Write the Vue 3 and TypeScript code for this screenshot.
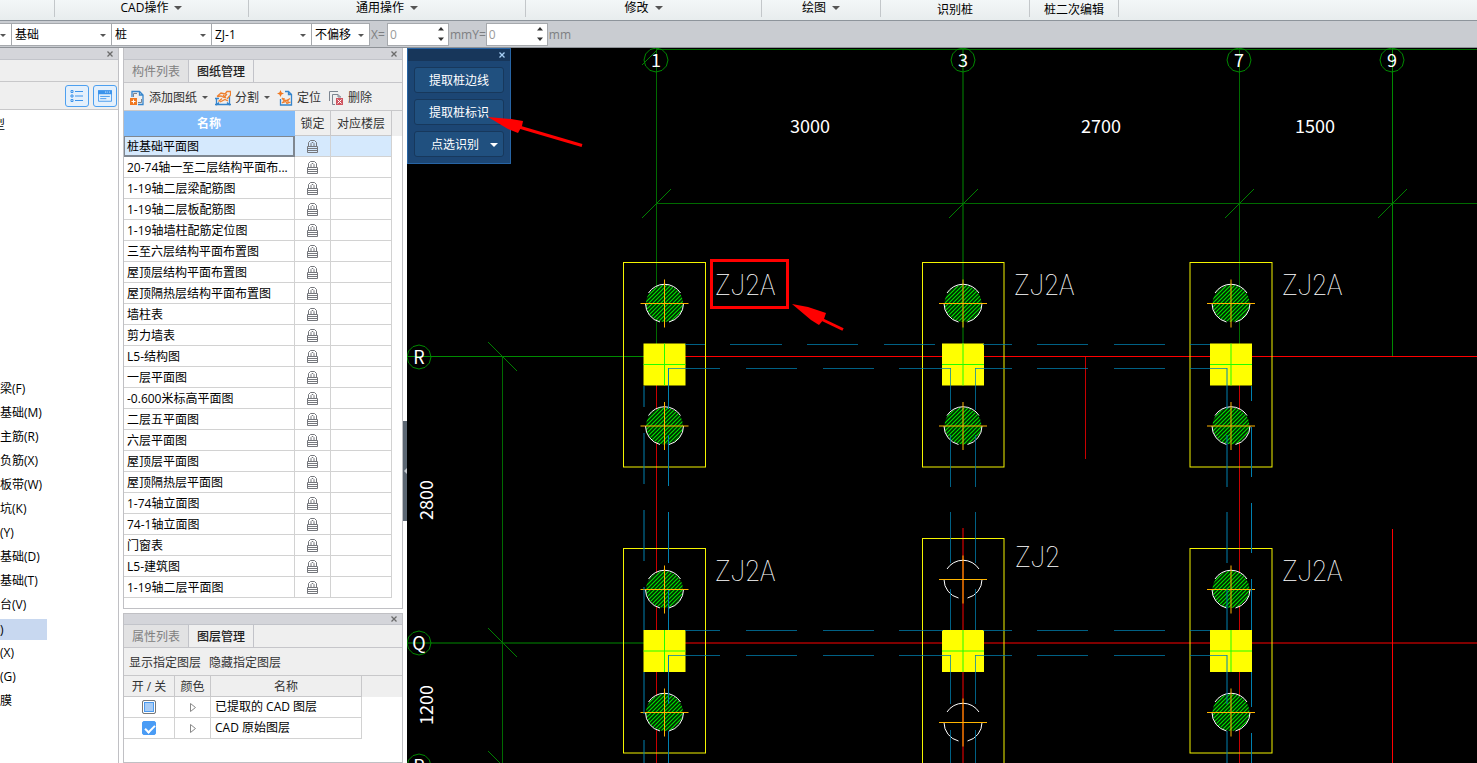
<script setup lang="ts">
import { ref } from 'vue'

interface RibbonGroup { label: string; menu: boolean }
interface Drawing { name: string }
interface Segment { x1: number; y1: number; x2: number; y2: number; kind: string }
interface Cap { frame: [number, number, number, number]; cx: number; piles: number[]; square: number; hatched: boolean; label: string; tx: number; ty: number }

const ribbon: RibbonGroup[] = [
  { label: '', menu: false },
  { label: 'CAD操作', menu: true },
  { label: '通用操作', menu: true },
  { label: '修改', menu: true },
  { label: '绘图', menu: true },
  { label: '识别桩', menu: false },
  { label: '桩二次编辑', menu: false },
]

const combos = [
  { id: 'category', label: '类别', value: '基础' },
  { id: 'type', label: '类型', value: '桩' },
  { id: 'component', label: '构件', value: 'ZJ-1' },
]

const tree = ['梁(F)', '基础(M)', '主筋(R)', '负筋(X)', '板带(W)', '坑(K)', '(Y)', '基础(D)', '基础(T)', '台(V)', ')', '(X)', '(G)', '膜']
const activeNode = 10

const drawings: Drawing[] = [
  '桩基础平面图', '20-74轴一至二层结构平面布...', '1-19轴二层梁配筋图', '1-19轴二层板配筋图',
  '1-19轴墙柱配筋定位图', '三至六层结构平面布置图', '屋顶层结构平面布置图', '屋顶隔热层结构平面布置图',
  '墙柱表', '剪力墙表', 'L5-结构图', '一层平面图', '-0.600米标高平面图', '二层五平面图', '六层平面图',
  '屋顶层平面图', '屋顶隔热层平面图', '1-74轴立面图', '74-1轴立面图', '门窗表', 'L5-建筑图', '1-19轴二层平面图',
].map((name) => ({ name }))
const selected = ref(0)

const layers = ref([
  { id: 'extracted', name: '已提取的 CAD 图层', on: false, partial: true },
  { id: 'original', name: 'CAD 原始图层', on: true, partial: false },
])

const offsetX = ref('0')
const offsetY = ref('0')

/* Drawing coordinates are window coordinates; the group is shifted into the canvas. */
const h = (y: number, kind: string, ...spans: [number, number][]): Segment[] =>
  spans.map(([a, b]) => ({ x1: a, y1: y, x2: b, y2: y, kind }))
const v = (x: number, kind: string, ...spans: [number, number][]): Segment[] =>
  spans.map(([a, b]) => ({ x1: x, y1: a, x2: x, y2: b, kind }))

const axes: Segment[] = [
  ...h(49.5, 'green-mid', [656, 2400]),
  ...h(203.5, 'green-mid', [656, 2400]),
  ...v(656.5, 'green-mid', [48, 344]),
  ...v(963, 'green', [48, 344]),
  ...v(1239.5, 'green-mid', [48, 344]),
  ...v(1392.5, 'green', [48, 356]),
  ...h(356.5, 'green', [407, 644]),
  ...h(643, 'green', [407, 644]),
  ...v(502.5, 'green-mid', [357, 1400]),
  ...h(356.5, 'red', [685, 2400]),
  ...h(643, 'red', [685, 2400]),
  ...v(656.5, 'red-mid', [385, 630], [672, 1400]),
  ...v(963, 'red', [528, 630], [672, 1400]),
  ...v(1239.5, 'red-mid', [385, 630], [672, 1400]),
  ...v(1085.5, 'red-mid', [357, 459]),
  ...v(1392.5, 'red', [529, 1400]),
]

const beams: Segment[] = [
  ...h(344.5, 'blue-mid', [685, 705], [730, 782], [807, 858], [884, 935], [983, 1012], [1037, 1088], [1114, 1165], [1190, 1210]),
  ...h(368.5, 'blue-mid', [668, 720], [746, 797], [823, 874], [899, 951], [975, 1012], [1037, 1088], [1114, 1165], [1190, 1227]),
  ...h(630.5, 'blue-mid', [685, 720], [746, 797], [823, 874], [899, 943], [983, 1012], [1037, 1088], [1114, 1165], [1190, 1210]),
  ...h(655.5, 'blue-mid', [668, 720], [746, 797], [823, 874], [899, 951], [975, 1012], [1037, 1088], [1114, 1165], [1190, 1227]),
  ...v(644, 'blue', [386, 407], [433, 484], [510, 561], [587, 630], [672, 714], [740, 791]),
  ...v(668.5, 'blue', [368, 409], [435, 486], [512, 563], [590, 630], [655, 704], [731, 782]),
  ...v(950.5, 'blue-mid', [368, 410], [435, 487], [512, 563], [589, 630], [655, 704], [730, 782]),
  ...v(975.5, 'blue-mid', [368, 410], [435, 487], [512, 563], [589, 630], [655, 704], [730, 782]),
  ...v(1227, 'blue', [368, 409], [435, 487], [512, 563], [589, 630], [655, 704], [731, 782]),
  ...v(1251.5, 'blue', [386, 401], [427, 477], [503, 553], [579, 630], [672, 707], [733, 784]),
]

const caps: Cap[] = [
  { frame: [623.5, 262.5, 82, 204.5], cx: 664.5, piles: [303.5, 426], square: 343.5, hatched: true, label: 'ZJ2A', tx: 715, ty: 295 },
  { frame: [922.5, 262.5, 81.5, 204.5], cx: 963, piles: [303.5, 426], square: 343.5, hatched: true, label: 'ZJ2A', tx: 1014, ty: 295 },
  { frame: [1190, 262.5, 82, 204.5], cx: 1231, piles: [303.5, 426], square: 343.5, hatched: true, label: 'ZJ2A', tx: 1282, ty: 295 },
  { frame: [623.5, 548.5, 82, 204.5], cx: 664.5, piles: [589.5, 712.5], square: 630, hatched: true, label: 'ZJ2A', tx: 715, ty: 581 },
  { frame: [922.5, 538.5, 81.5, 300], cx: 963, piles: [579.5, 722.5], square: 630, hatched: false, label: 'ZJ2', tx: 1015, ty: 567 },
  { frame: [1190, 548.5, 82, 204.5], cx: 1231, piles: [589.5, 712.5], square: 630, hatched: true, label: 'ZJ2A', tx: 1282, ty: 581 },
]

const bubbles = [
  { x: 656, y: 60, t: '1' }, { x: 963, y: 60, t: '3' }, { x: 1239, y: 60, t: '7' }, { x: 1392, y: 60, t: '9' },
  { x: 419, y: 357, t: 'R' }, { x: 419, y: 643, t: 'Q' }, { x: 419, y: 766, t: 'P' },
]
const ring = (cx: number, cy: number): string =>
  Array.from({ length: 12 }, (_, i) => {
    const a = (i * Math.PI) / 6
    return `${(cx + 12 * Math.cos(a)).toFixed(1)},${(cy + 12 * Math.sin(a)).toFixed(1)}`
  }).join(' ')

const ticksUp = [[656, 203], [963, 203], [1239, 203], [1392, 203], [656, 50]]
const ticksDown = [[502, 357], [502, 643], [502, 766]]
const dims = [{ x: 810, y: 133, t: '3000' }, { x: 1101, y: 133, t: '2700' }, { x: 1315, y: 133, t: '1500' }]
const sideDims = [{ x: 433, y: 500, t: '2800' }, { x: 433, y: 705, t: '1200' }]
</script>

<template>
  <div class="app">
    <nav class="ribbon">
      <div v-for="(g, i) in ribbon" :key="i" class="group">
        <button v-if="g.label" type="button" class="plain" :class="{ menu: g.menu }">
          {{ g.label }}
          <svg v-if="g.menu" class="tri big" viewBox="0 0 8 4"><path d="M0 0h8L4 4z" /></svg>
        </button>
      </div>
    </nav>

    <div class="options">
      <div class="combo stub">
        <select aria-label="楼层"><option></option></select>
        <svg class="tri" viewBox="0 0 6 3"><path d="M0 0h6L3 3z" /></svg>
      </div>
      <div v-for="c in combos" :key="c.id" class="combo">
        <select :id="c.id" :aria-label="c.label"><option>{{ c.value }}</option></select>
        <svg class="tri" viewBox="0 0 6 3"><path d="M0 0h6L3 3z" /></svg>
      </div>
      <div class="combo short">
        <select aria-label="偏移"><option>不偏移</option></select>
        <svg class="tri" viewBox="0 0 6 3"><path d="M0 0h6L3 3z" /></svg>
      </div>
      <label for="ox" class="unit lead">X=</label>
      <div class="spin">
        <input id="ox" v-model="offsetX" type="text" />
        <svg viewBox="0 0 6 14"><path d="M0 3.500L3 0l3 3.500zM0 10.500h6L3 14z" /></svg>
      </div>
      <label for="oy" class="unit">mmY=</label>
      <div class="spin">
        <input id="oy" v-model="offsetY" type="text" />
        <svg viewBox="0 0 6 14"><path d="M0 3.500L3 0l3 3.500zM0 10.500h6L3 14z" /></svg>
      </div>
      <span class="unit">mm</span>
    </div>

    <main class="work">
      <aside class="nav">
        <div class="strip">
          <button type="button" class="close" aria-label="关闭导航"><svg viewBox="0 0 6 6"><path d="M0.500 0.500l5 5M5.500 0.500l-5 5" /></svg></button>
        </div>
        <div class="nav-head"></div>
        <div class="nav-tools">
          <button type="button" class="view" aria-label="列表视图">
            <svg viewBox="0 0 14 14"><path d="M1 1.500h2v2H1zM1 6h2v2H1zM1 10.500h2v2H1z" /><path d="M5 2.500h8M5 7h8M5 11.500h8" /></svg>
          </button>
          <button type="button" class="view" aria-label="卡片视图">
            <svg viewBox="0 0 16 14"><path d="M0.500 1h15v12H0.500z" /><path class="solid" d="M0 0.500h16V5H0z" /><path d="M2.500 7.500h11M2.500 10h7" /><path class="dots" d="M8 2.500h1M10 2.500h1M12.500 2.500h1" /></svg>
          </button>
        </div>
        <ul class="tree">
          <li class="root">型</li>
          <li v-for="(n, i) in tree" :key="i" :class="{ active: i === activeNode }"><span>{{ n }}</span></li>
        </ul>
      </aside>

      <div class="docks">
        <section class="dock">
          <div class="strip">
            <button type="button" class="close" aria-label="关闭图纸管理"><svg viewBox="0 0 6 6"><path d="M0.500 0.500l5 5M5.500 0.500l-5 5" /></svg></button>
          </div>
          <div class="tabs" role="tablist">
            <button type="button" role="tab">构件列表</button>
            <button type="button" role="tab" class="on">图纸管理</button>
          </div>
          <div class="tools">
            <button type="button" class="tool">
              <svg class="ico" viewBox="0 0 16 16">
                <path class="gray" d="M4.500 7V3.500H8M12.500 9v3.500H9" />
                <path class="blue" d="M3 7V1.500h7.500L14 5v9.500H9M10.500 1.500V5H14" />
                <path class="orange-fill" d="M1 8h7v7H1z" /><path class="white" d="M4.500 9.500v4M2.500 11.500h4" />
              </svg>
              添加图纸
              <svg class="tri" viewBox="0 0 6 3"><path d="M0 0h6L3 3z" /></svg>
            </button>
            <button type="button" class="tool">
              <svg class="ico" viewBox="0 0 16 16">
                <path class="blue" d="M1.500 15.500V8M0 14.500h16M14.500 15.500V6M0 8.500h4M12 12.500l2 2M4 12.500l-2 2" />
                <path class="orange" d="M2 6.500L6 3l4 1 2-2.500h3.500V5L12 9M2 6.500L6 6l3 1.500L12 4M3.500 11.500L7 8.500M5 12l5-2.500 3 1.500M8 5l3 3" />
              </svg>
              分割
              <svg class="tri" viewBox="0 0 6 3"><path d="M0 0h6L3 3z" /></svg>
            </button>
            <button type="button" class="tool">
              <svg class="ico" viewBox="0 0 16 16">
                <path class="orange-fill" d="M3.500 0L4.600 2.400 7 3.500 4.600 4.600 3.500 7 2.400 4.600 0 3.500 2.400 2.400z" />
                <path class="blue" d="M8 1.500h3.500L14.500 4.500v10.500H3.500V9M11.500 1.500V4.500H15" />
                <path class="orange" d="M5 8l2 2.500h3L13 8.500M5 13l3-2.500 2 3 3.500-1.500M7 8v5M11 9v4" />
              </svg>
              定位
            </button>
            <button type="button" class="tool">
              <svg class="ico" viewBox="0 0 16 16">
                <path class="gray" d="M1.500 11V1.500H10M7 14.500H4.500v-10H10L12.500 7M10 4.500V7h3" />
                <path class="red-fill" d="M8 8h7v7H8z" /><path class="white" d="M9.500 9.500l4 4M13.500 9.500l-4 4" />
              </svg>
              删除
            </button>
          </div>
          <div class="grid-wrap">
            <table class="sheet">
              <colgroup><col class="c-name" /><col class="c-lock" /><col class="c-floor" /></colgroup>
              <thead><tr><th class="key">名称</th><th>锁定</th><th>对应楼层</th></tr></thead>
              <tbody>
                <tr v-for="(d, i) in drawings" :key="i" :class="{ sel: i === selected }" @click="selected = i">
                  <td>{{ d.name }}</td>
                  <td class="lock">
                    <svg viewBox="0 0 11 14"><path d="M1.500 7.500V3.500L3.500 1.500h4L9.500 3.500V7.500M4 7.500V4.500l1-1h1l1 1V7.500" /><path d="M0.500 7.500h10v6H0.500zM0.500 9.500h10M0.500 11.500h10" /></svg>
                  </td>
                  <td></td>
                </tr>
              </tbody>
            </table>
          </div>
        </section>

        <section class="dock lower">
          <div class="strip">
            <button type="button" class="close" aria-label="关闭图层管理"><svg viewBox="0 0 6 6"><path d="M0.500 0.500l5 5M5.500 0.500l-5 5" /></svg></button>
          </div>
          <div class="tabs" role="tablist">
            <button type="button" role="tab">属性列表</button>
            <button type="button" role="tab" class="on">图层管理</button>
          </div>
          <div class="tools">
            <button type="button" class="tool">显示指定图层</button>
            <button type="button" class="tool">隐藏指定图层</button>
          </div>
          <div class="grid-wrap low">
            <table class="sheet layers">
              <colgroup><col class="c-on" /><col class="c-lock" /><col class="c-layer" /></colgroup>
              <thead><tr><th>开 / 关</th><th>颜色</th><th>名称</th></tr></thead>
              <tbody>
                <tr v-for="l in layers" :key="l.id">
                  <td class="mid"><input :id="l.id" v-model="l.on" type="checkbox" :class="{ partial: l.partial }" /></td>
                  <td class="mid"><svg class="play" viewBox="0 0 6 9"><path d="M0.500 0.500v8L5.500 4.500z" /></svg></td>
                  <td class="layer"><label :for="l.id">{{ l.name }}</label></td>
                </tr>
              </tbody>
            </table>
          </div>
        </section>
      </div>

      <div class="splitter">
        <button type="button" aria-label="折叠面板"><svg viewBox="0 0 3 6"><path d="M3 0v6L0 3z" /></svg></button>
      </div>

      <div class="canvas">
        <svg class="cad" role="img" aria-label="桩基础平面图">
          <defs>
            <pattern id="hatch" width="4" height="4" patternUnits="userSpaceOnUse">
              <rect width="4" height="4" fill="#002400" />
              <path d="M-1 1L1 -1M0 4L4 0M3 5L5 3" stroke="#00e000" stroke-width="1.200" />
            </pattern>
          </defs>
          <g transform="translate(-407 -48)">
            <line v-for="(s, i) in axes" :key="'a' + i" :x1="s.x1" :y1="s.y1" :x2="s.x2" :y2="s.y2" :class="s.kind" />
            <g class="tick">
              <line v-for="(p, i) in ticksUp" :key="'u' + i" :x1="p[0] - 14" :y1="p[1] + 15" :x2="p[0] + 15" :y2="p[1] - 14" />
              <line v-for="(p, i) in ticksDown" :key="'d' + i" :x1="p[0] - 14" :y1="p[1] - 15" :x2="p[0] + 15" :y2="p[1] + 14" />
            </g>
            <g v-for="(b, i) in bubbles" :key="'b' + i">
              <polygon class="ring" :points="ring(b.x, b.y)" />
              <text class="note" :x="b.x" :y="b.y + 7">{{ b.t }}</text>
            </g>
            <text v-for="d in dims" :key="d.t" class="note" :x="d.x" :y="d.y">{{ d.t }}</text>
            <text v-for="d in sideDims" :key="d.t" class="note" :transform="`translate(${d.x} ${d.y}) rotate(-90)`">{{ d.t }}</text>

            <g v-for="(c, i) in caps" :key="'c' + i">
              <rect class="frame" :x="c.frame[0]" :y="c.frame[1]" :width="c.frame[2]" :height="c.frame[3]" />
              <g v-for="p in c.piles" :key="p">
                <circle v-if="c.hatched" :cx="c.cx" :cy="p" r="18.500" fill="url(#hatch)" />
                <path
                  class="arc"
                  :transform="`translate(${c.cx} ${p})`"
                  d="M-16 -10.500A19 19 0 0 1 16 -10.500M19 0A19 19 0 0 1 4.500 18.500M-4.500 18.500A19 19 0 0 1 -19 0"
                />
                <path class="cross" :transform="`translate(${c.cx} ${p})`" d="M-24 0H24M0 -24V24" />
              </g>
              <rect class="column" :x="c.cx - 21" :y="c.square" width="42" height="42" />
              <path class="mark" :transform="`translate(${c.cx} ${c.square + 21})`" d="M-21 0H21M0 -21V21" />
              <text class="cap-label" :x="c.tx" :y="c.ty">{{ c.label }}</text>
            </g>
            <line v-for="(s, i) in beams" :key="'s' + i" :x1="s.x1" :y1="s.y1" :x2="s.x2" :y2="s.y2" :class="s.kind" />
          </g>
        </svg>

        <div class="palette">
          <div class="palette-bar">
            <button type="button" class="close" aria-label="关闭识别工具"><svg viewBox="0 0 6 6"><path d="M0.500 0.500l5 5M5.500 0.500l-5 5" /></svg></button>
          </div>
          <div class="palette-body">
            <button type="button">提取桩边线</button>
            <button type="button">提取桩标识</button>
            <button type="button" class="split">点选识别 <svg class="tri" viewBox="0 0 8 4"><path d="M0 0h8L4 4z" /></svg></button>
          </div>
        </div>

        <svg class="marks" aria-hidden="true">
          <g transform="translate(-407 -48)">
            <rect x="711.500" y="260.500" width="76" height="47" />
            <path class="head" d="M488 117L511 119 523 121 522 126 518 133 508 129z" />
            <path d="M519 127L582 145.500" />
            <path class="head" d="M792 304L808 307 826 313 824 319 819 325 811 320z" />
            <path d="M821 319L843 329.500" />
          </g>
        </svg>
      </div>
    </main>
  </div>
</template>

<style>
html,
body {
  margin: 0;
  background: #fff;
}
</style>

<style scoped>
.app {
  display: flex;
  flex-direction: column;
  height: 100vh;
  overflow: hidden;
  background: #fff;
  color: #000;
  font: 12px/16px "Open Sans", "Noto Sans CJK SC", sans-serif;
}
.app * {
  box-sizing: border-box;
}
button,
input,
select {
  font: inherit;
  color: inherit;
  margin: 0;
}
button {
  border: 0;
  padding: 0;
  background: none;
  white-space: nowrap;
}
svg {
  display: block;
  flex: none;
}
.tri {
  width: 6px;
  height: 3px;
  fill: #555;
}

/* ribbon */
.ribbon {
  display: grid;
  grid-template-columns: 55px 194px 277px 236px 119px 149px 89px 1fr;
  height: 21px;
  flex: none;
  background: linear-gradient(#f3f7f8, #e8edee);
  border-bottom: 1px solid #8d949b;
}
.group {
  height: 17px;
  display: flex;
  justify-content: center;
  border-right: 1px solid #c3c7ca;
}
.plain {
  display: flex;
  align-items: center;
  gap: 6px;
  padding-top: 2px;
}
.plain.menu {
  padding: 0 0 2px;
}
.tri.big {
  width: 8px;
  height: 4px;
}

/* option bar */
.options {
  display: flex;
  align-items: center;
  height: 27px;
  flex: none;
  background: #c9ccd1;
  border-bottom: 1px solid #8e9297;
}
.combo {
  position: relative;
  width: 100px;
  height: 23px;
  border: 1px solid #a6a9ad;
  border-left-width: 0;
  background: #fff;
}
.combo.stub {
  width: 12px;
}
.combo.short {
  width: 58px;
}
.combo select {
  width: 100%;
  height: 100%;
  padding: 2px 0 0 3px;
  border: 0;
  background: none;
  appearance: none;
}
.combo .tri {
  position: absolute;
  right: 5px;
  top: 10px;
}
.unit {
  padding: 2px 0 0 1px;
  color: #7d7f82;
}
.lead {
  width: 17px;
}
.spin {
  display: flex;
  align-items: center;
  width: 62px;
  height: 23px;
  padding-right: 4px;
  border: 1px solid #a6a9ad;
  background: #fff;
}
.spin input {
  width: 0;
  flex: 1;
  border: 0;
  padding: 2px 2px 0;
  color: #9a9a9a;
  background: none;
}
.spin svg {
  width: 6px;
  height: 14px;
  fill: #333;
}

/* workspace */
.work {
  display: flex;
  flex: 1;
  min-height: 0;
}
.strip {
  display: flex;
  justify-content: flex-end;
  align-items: center;
  height: 12px;
  flex: none;
  padding-right: 5px;
  background: #d4d5da;
  border-bottom: 1px solid #c2c4ca;
}
.close svg {
  width: 6px;
  height: 6px;
  fill: none;
  stroke: #6b6b6b;
  stroke-width: 1.300;
}
.nav {
  width: 119px;
  flex: none;
  border-right: 1px solid #c0c0c4;
  overflow: hidden;
}
.nav-head {
  height: 22px;
  background: #efefef;
  border-bottom: 1px solid #c8c8ca;
}
.nav-tools {
  display: flex;
  justify-content: flex-end;
  align-items: center;
  gap: 4px;
  height: 28px;
  padding-right: 1px;
  background: #efefef;
  border-bottom: 1px solid #c8c8ca;
}
.view {
  display: grid;
  place-items: center;
  width: 24px;
  height: 22px;
  border: 1px solid #4da0f0;
  border-radius: 3px;
  background: #e4f0fc;
}
.view svg {
  width: 14px;
  height: 14px;
  fill: none;
  stroke: #3c94ec;
}
.view .solid {
  fill: #3c94ec;
  stroke: none;
}
.view .dots {
  stroke: #fff;
}
.tree {
  margin: 0;
  padding: 3px 0 0;
  list-style: none;
}
.tree li {
  height: 24px;
  line-height: 24px;
}
.tree .root {
  margin: 0 0 240px;
  text-indent: -7px;
}
.tree .active {
  display: flex;
  align-items: center;
}
.tree .active span {
  width: 47px;
  height: 21px;
  line-height: 21px;
  background: #c8d8f0;
}

.docks {
  display: flex;
  flex-direction: column;
  gap: 4px;
  width: 280px;
  margin-left: 4px;
  flex: none;
}
.dock {
  border: 1px solid #c0c0c4;
  border-top: 0;
  padding-bottom: 10px;
}
.lower {
  flex: 1;
  border-top: 1px solid #c0c0c4;
}
.lower .strip {
  height: 11px;
}
.tabs {
  display: flex;
  height: 23px;
  background: #efefef;
  border-bottom: 1px solid #c6c6ca;
}
.tabs button {
  width: 65px;
  padding-top: 2px;
  border-right: 1px solid #c2c3c9;
  background: #e2e2e3;
  color: #808080;
}
.tabs .on {
  background: #efefef;
  color: #222;
  font-weight: 500;
}
.tools {
  display: flex;
  align-items: center;
  gap: 7px;
  height: 28px;
  padding: 2px 0 0 5px;
  background: #efefef;
  border-bottom: 1px solid #c8c8ca;
  color: #333;
}
.lower .tools {
  gap: 8px;
}
.tool {
  display: flex;
  align-items: center;
  gap: 4px;
}
.tool .tri {
  margin-left: 1px;
}
.ico {
  width: 16px;
  height: 16px;
  fill: none;
}
.ico .blue {
  stroke: #3585cc;
  stroke-width: 1.300;
}
.ico .gray {
  stroke: #7c8590;
}
.ico .orange {
  stroke: #ee8030;
  stroke-width: 1.300;
}
.ico .white {
  stroke: #fff;
}
.ico .orange-fill {
  fill: #f07820;
}
.ico .red-fill {
  fill: #cf5560;
}
.grid-wrap {
  background: linear-gradient(#efefef 25px, #fff 25px);
}
.grid-wrap.low {
  background: linear-gradient(#efefef 21px, #fff 21px);
}
.sheet {
  border-collapse: separate;
  border-spacing: 0;
  table-layout: fixed;
  width: 268px;
}
.layers {
  width: 238px;
}
.c-name {
  width: 171px;
}
.c-lock {
  width: 36px;
}
.c-floor {
  width: 61px;
}
.c-on {
  width: 51px;
}
.c-layer {
  width: 151px;
}
.sheet th {
  height: 25px;
  padding: 2px 0 0;
  font-weight: 400;
  color: #333;
  background: #efefef;
  border-right: 1px solid #c8c8ca;
  border-bottom: 1px solid #c8c8ca;
}
.layers th {
  height: 21px;
}
.sheet .key {
  background: #80bbfa;
  border-color: #80bbfa;
  color: #fff;
  font-weight: 700;
}
.sheet td {
  height: 21px;
  padding: 2px 0 0 3px;
  white-space: nowrap;
  background: #fff;
  border-right: 1px solid #d2d2d2;
  border-bottom: 1px solid #d2d2d2;
}
.sheet .sel td {
  background: #d5e9fd;
}
.sheet .sel td:first-child {
  box-shadow: inset 0 0 0 1px #7f8790;
  border-color: #7f8790;
}
.sheet .lock,
.sheet .mid {
  padding: 0;
}
.lock svg {
  width: 11px;
  height: 14px;
  margin: 0 auto;
  fill: none;
  stroke: #75777c;
}
.play {
  width: 6px;
  height: 9px;
  margin: 0 auto;
  fill: none;
  stroke: #888;
}
.layers .layer {
  padding: 0 0 0 4px;
}
.mid input {
  display: block;
  width: 14px;
  height: 14px;
  margin: 0 auto;
  appearance: none;
  border-radius: 2px;
  border: 1px solid #777;
  background: #fff;
}
.mid input.partial {
  box-shadow: inset 0 0 0 1px #fff, inset 0 0 0 2px #4a9af0;
  background: #a8ccf5;
}
.mid input:checked {
  border-color: #4a9cf5;
  background: #4a9cf5;
}
.mid input:checked::before {
  content: "";
  display: block;
  width: 8px;
  height: 4px;
  margin: 3px 2px;
  border: solid #fff;
  border-width: 0 0 2px 2px;
  transform: rotate(-45deg);
}

.splitter {
  display: flex;
  width: 4px;
  flex: none;
  padding-top: 373px;
}
.splitter button {
  width: 4px;
  height: 100px;
  background: #5c6773;
}
.splitter svg {
  width: 3px;
  height: 6px;
  margin-left: 1px;
  fill: #c5cad0;
}

/* drawing canvas */
.canvas {
  position: relative;
  flex: 1;
  min-width: 0;
  background: #000;
  overflow: hidden;
}
.cad,
.marks {
  position: absolute;
  inset: 0;
  width: 100%;
  height: 100%;
}
.cad .green {
  stroke: #008a00;
}
.cad .green-mid {
  stroke: #006a00;
}
.cad .red {
  stroke: #ff0000;
}
.cad .red-mid {
  stroke: #c80000;
}
.cad .blue {
  stroke: #0080b0;
}
.cad .blue-mid {
  stroke: #0080b0;
  stroke-opacity: 0.75;
}
.cad .tick line {
  stroke: #008000;
}
.ring {
  fill: none;
  stroke: #008a00;
}
.note {
  fill: #fff;
  font: 18px "Noto Sans CJK SC", sans-serif;
  text-anchor: middle;
}
.frame {
  fill: none;
  stroke: #f4f400;
}
.arc {
  fill: none;
  stroke: #fff;
}
.cross {
  fill: none;
  stroke: #ffb400;
}
.column {
  fill: #ff0;
}
.mark {
  stroke: #20ff00;
}
.cap-label {
  fill: #fff;
  font: 100 30px "Roboto Condensed", "Liberation Sans Narrow", Roboto, sans-serif;
}
.marks {
  pointer-events: none;
  fill: none;
  stroke: #f00;
  stroke-width: 3;
}
.marks .head {
  fill: #f00;
  stroke: none;
}

.palette {
  position: absolute;
  left: 0;
  top: 0;
  width: 104px;
  background: #1c4674;
  border: 1px solid #2764a4;
}
.palette-bar {
  display: flex;
  justify-content: flex-end;
  align-items: center;
  height: 12px;
  padding-right: 5px;
  background: #17365a;
}
.palette .close svg {
  stroke: #a9d0f5;
}
.palette-body {
  display: flex;
  flex-direction: column;
  gap: 6px;
  padding: 6px;
}
.palette-body button {
  height: 26px;
  padding-top: 2px;
  border: 1px solid #17385c;
  border-radius: 3px;
  background: #20507f;
  color: #fff;
}
.palette-body .split {
  display: flex;
  align-items: center;
  justify-content: flex-end;
  gap: 11px;
  padding-right: 5px;
}
.palette .tri {
  width: 8px;
  height: 4px;
  fill: #fff;
}
</style>
